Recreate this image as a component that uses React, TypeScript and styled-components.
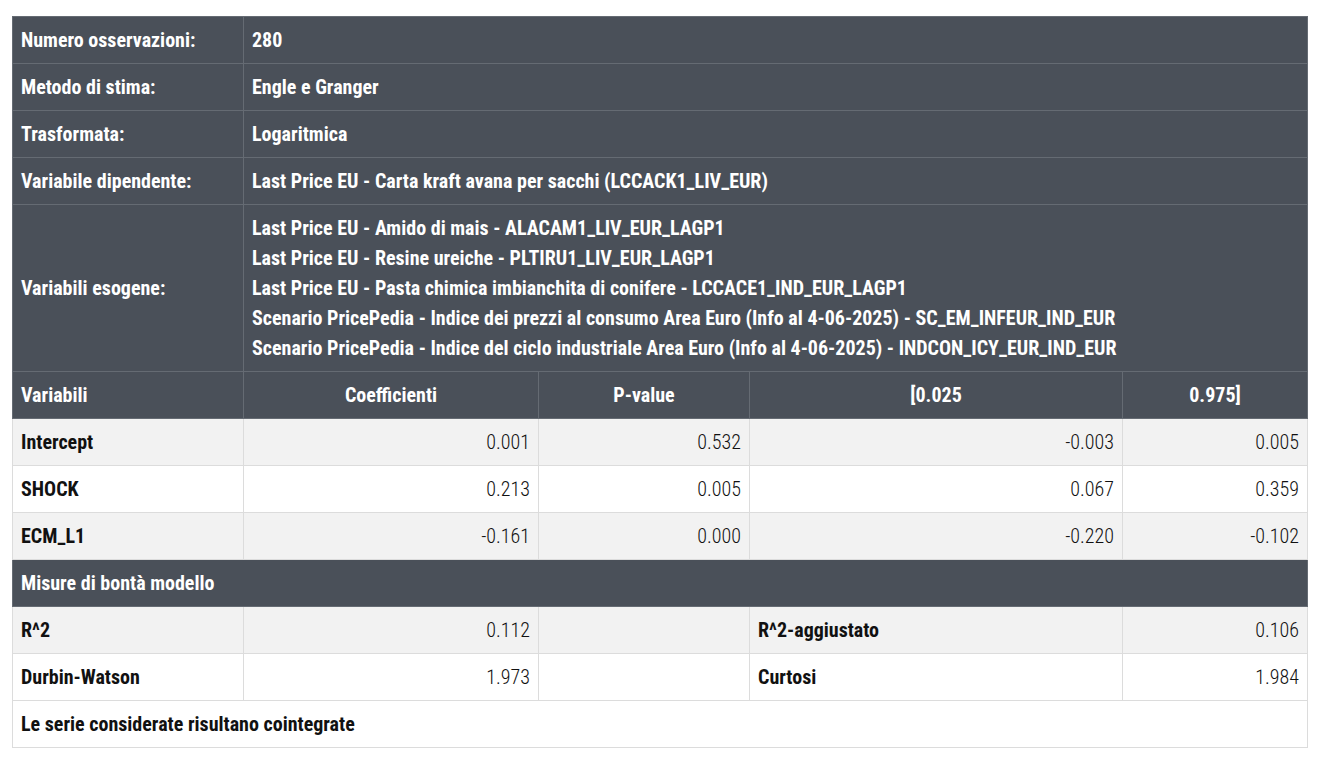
import styled, { createGlobalStyle } from "styled-components";

const GlobalStyle = createGlobalStyle`
  body {
    margin: 0;
    background: #fff;
    font-family: Roboto, "Liberation Sans", Arial, sans-serif;
    font-stretch: 75%;
  }
`;

const Page = styled.div`
  padding: 16px 12px 0 12px;
`;

const Table = styled.table`
  width: 1295px;
  border-collapse: collapse;
  table-layout: fixed;
  font-size: 20px;
  line-height: 30px;
  color: #111;
`;

const Row = styled.tr<{ $tone: "dark" | "light" | "white" }>`
  background: ${(p) =>
    p.$tone === "dark" ? "#4a5059" : p.$tone === "light" ? "#f2f2f2" : "#fff"};
  color: ${(p) => (p.$tone === "dark" ? "#fff" : "#111")};
  & > td {
    border: 1px solid ${(p) => (p.$tone === "dark" ? "#656b73" : "#dcdcdc")};
  }
`;

const Cell = styled.td<{ $align?: "left" | "right" | "center"; $num?: boolean }>`
  padding: 8px 8px;
  text-align: ${(p) => p.$align ?? "left"};
  font-weight: ${(p) => (p.$num ? 300 : 700)};
  vertical-align: middle;
  white-space: nowrap;
`;

const info: [string, string[]][] = [
  ["Numero osservazioni:", ["280"]],
  ["Metodo di stima:", ["Engle e Granger"]],
  ["Trasformata:", ["Logaritmica"]],
  ["Variabile dipendente:", ["Last Price EU - Carta kraft avana per sacchi (LCCACK1_LIV_EUR)"]],
  [
    "Variabili esogene:",
    [
      "Last Price EU - Amido di mais - ALACAM1_LIV_EUR_LAGP1",
      "Last Price EU - Resine ureiche - PLTIRU1_LIV_EUR_LAGP1",
      "Last Price EU - Pasta chimica imbianchita di conifere - LCCACE1_IND_EUR_LAGP1",
      "Scenario PricePedia - Indice dei prezzi al consumo Area Euro (Info al 4-06-2025) - SC_EM_INFEUR_IND_EUR",
      "Scenario PricePedia - Indice del ciclo industriale Area Euro (Info al 4-06-2025) - INDCON_ICY_EUR_IND_EUR",
    ],
  ],
];

const coefs = [
  ["Intercept", "0.001", "0.532", "-0.003", "0.005"],
  ["SHOCK", "0.213", "0.005", "0.067", "0.359"],
  ["ECM_L1", "-0.161", "0.000", "-0.220", "-0.102"],
];

export default function App() {
  return (
    <Page>
      <GlobalStyle />
      <Table>
        <colgroup>
          <col style={{ width: 231 }} />
          <col style={{ width: 295 }} />
          <col style={{ width: 211 }} />
          <col style={{ width: 373 }} />
          <col style={{ width: 185 }} />
        </colgroup>
        <tbody>
          {info.map(([label, lines]) => (
            <Row $tone="dark" key={label}>
              <Cell>{label}</Cell>
              <Cell colSpan={4}>
                {lines.map((l) => (
                  <div key={l}>{l}</div>
                ))}
              </Cell>
            </Row>
          ))}
          <Row $tone="dark">
            <Cell>Variabili</Cell>
            <Cell $align="center">Coefficienti</Cell>
            <Cell $align="center">P-value</Cell>
            <Cell $align="center">[0.025</Cell>
            <Cell $align="center">0.975]</Cell>
          </Row>
          {coefs.map(([name, ...vals], i) => (
            <Row $tone={i % 2 === 0 ? "light" : "white"} key={name}>
              <Cell>{name}</Cell>
              {vals.map((v, j) => (
                <Cell $align="right" $num key={j}>
                  {v}
                </Cell>
              ))}
            </Row>
          ))}
          <Row $tone="dark">
            <Cell colSpan={5}>Misure di bontà modello</Cell>
          </Row>
          <Row $tone="light">
            <Cell>R^2</Cell>
            <Cell $align="right" $num>0.112</Cell>
            <Cell />
            <Cell>R^2-aggiustato</Cell>
            <Cell $align="right" $num>0.106</Cell>
          </Row>
          <Row $tone="white">
            <Cell>Durbin-Watson</Cell>
            <Cell $align="right" $num>1.973</Cell>
            <Cell />
            <Cell>Curtosi</Cell>
            <Cell $align="right" $num>1.984</Cell>
          </Row>
          <Row $tone="white">
            <Cell colSpan={5}>Le serie considerate risultano cointegrate</Cell>
          </Row>
        </tbody>
      </Table>
    </Page>
  );
}
